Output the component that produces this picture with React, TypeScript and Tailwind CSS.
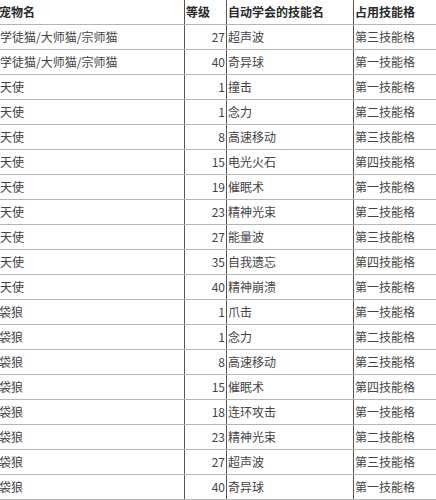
const rows: [string, number, string, string][] = [
  ["学徒猫/大师猫/宗师猫", 27, "超声波", "第三技能格"],
  ["学徒猫/大师猫/宗师猫", 40, "奇异球", "第一技能格"],
  ["天使", 1, "撞击", "第一技能格"],
  ["天使", 1, "念力", "第二技能格"],
  ["天使", 8, "高速移动", "第三技能格"],
  ["天使", 15, "电光火石", "第四技能格"],
  ["天使", 19, "催眠术", "第一技能格"],
  ["天使", 23, "精神光束", "第二技能格"],
  ["天使", 27, "能量波", "第三技能格"],
  ["天使", 35, "自我遗忘", "第四技能格"],
  ["天使", 40, "精神崩溃", "第一技能格"],
  ["袋狼", 1, "爪击", "第一技能格"],
  ["袋狼", 1, "念力", "第二技能格"],
  ["袋狼", 8, "高速移动", "第三技能格"],
  ["袋狼", 15, "催眠术", "第四技能格"],
  ["袋狼", 18, "连环攻击", "第一技能格"],
  ["袋狼", 23, "精神光束", "第二技能格"],
  ["袋狼", 27, "超声波", "第三技能格"],
  ["袋狼", 40, "奇异球", "第一技能格"],
];

const font = { fontFamily: '"Noto Sans CJK SC", "Liberation Sans", sans-serif' };

function Row({ cells, head }: { cells: (string | number)[]; head?: boolean }) {
  const [name, lv, skill, slot] = cells;
  return (
    <div
      className={`grid h-[25px] grid-cols-[185px_42px_127px_1fr] items-stretch border-b border-[#b4b4b4] text-[12px] leading-none ${
        head ? "font-semibold text-[#2a2a2a]" : "text-[#444]"
      }`}
    >
      <div className="flex items-center overflow-hidden border-r border-[#555]">
        <span className={name === "袋狼" || head ? "-ml-[1px]" : ""}>{name}</span>
      </div>
      <div
        className={`flex items-center border-r border-[#555] ${
          head ? "pl-[1px]" : "justify-end pr-[1px]"
        }`}
      >
        {lv}
      </div>
      <div className="flex items-center border-r border-[#555] pl-[1px]">{skill}</div>
      <div className="flex items-center pl-[1px]">{slot}</div>
    </div>
  );
}

export default function App() {
  return (
    <div className="h-[500px] w-[436px] overflow-hidden bg-white" style={font}>
      <Row head cells={["宠物名", "等级", "自动学会的技能名", "占用技能格"]} />
      {rows.map((r, i) => (
        <Row key={i} cells={r} />
      ))}
    </div>
  );
}
